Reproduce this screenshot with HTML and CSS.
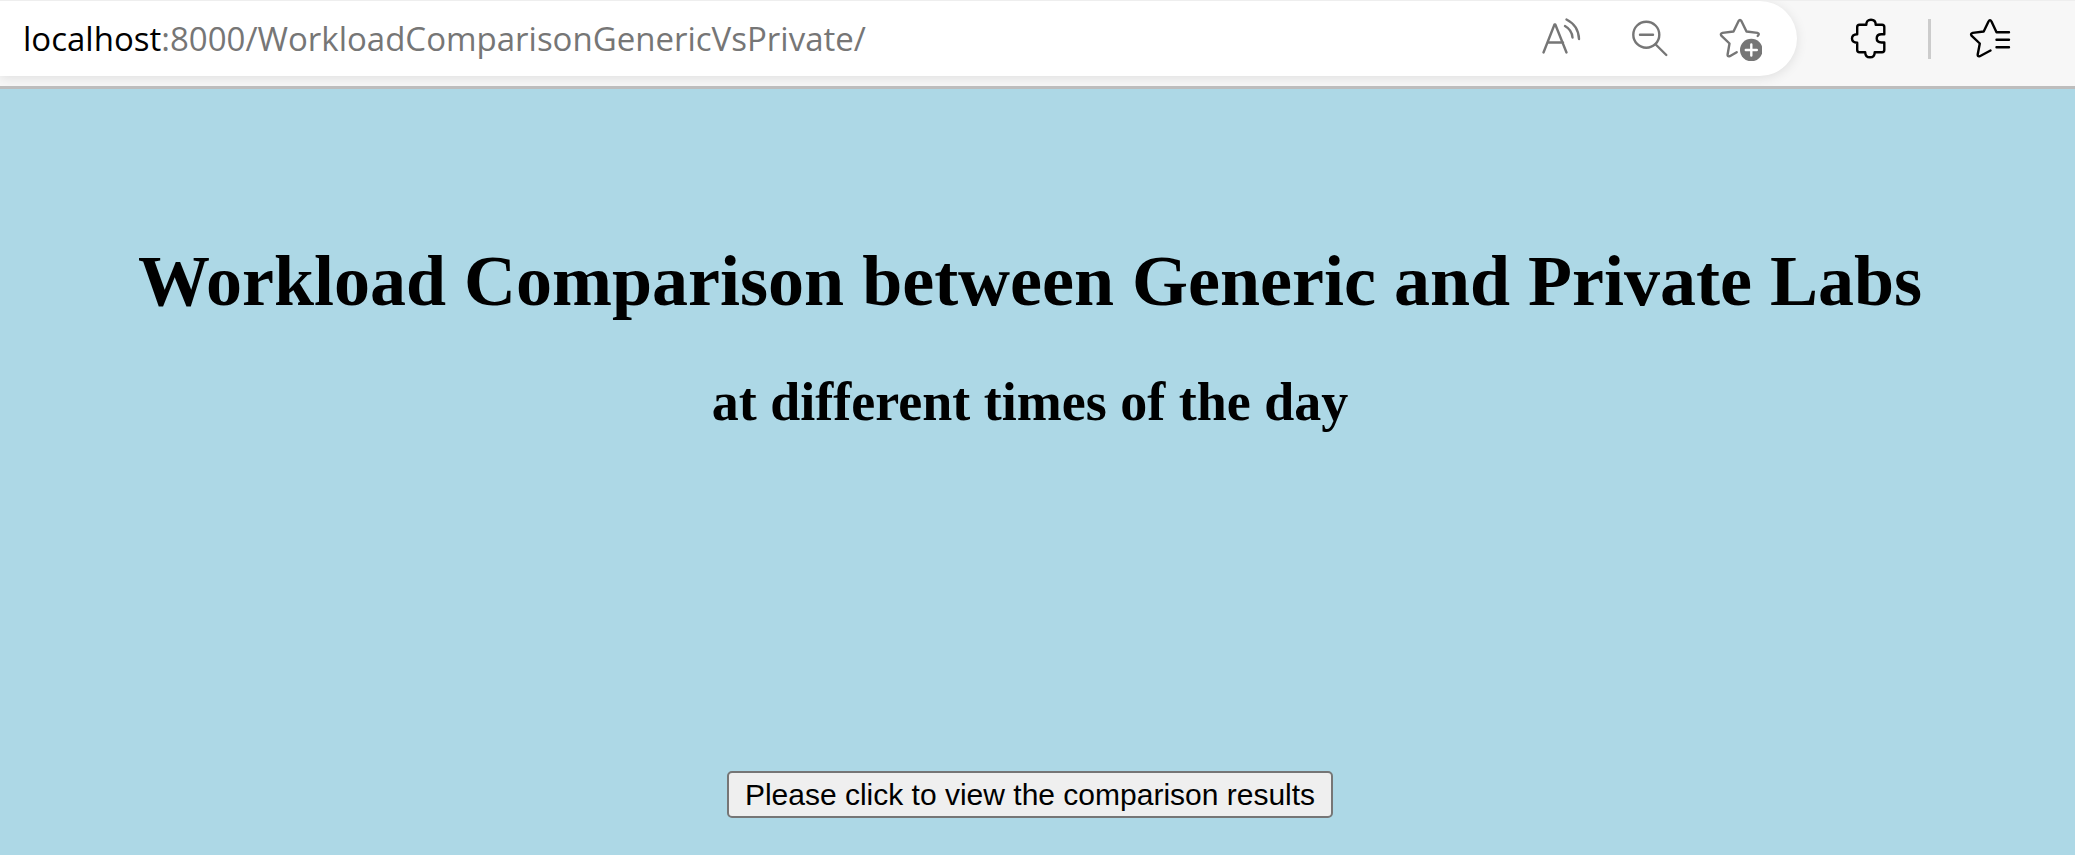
FILE: index.html
```html
<!DOCTYPE html>
<html lang="en">
<head>
<meta charset="utf-8">
<meta name="viewport" content="width=device-width, initial-scale=1">
<title>Workload Comparison</title>
<link rel="stylesheet" href="styles.css">
</head>
<body>
<header class="toolbar">
  <div class="omnibox">
    <div class="url" role="textbox" contenteditable="true" spellcheck="false" aria-label="Address"><span class="url-host">localhost</span>:8000/WorkloadComparisonGenericVsPrivate/</div>
    <button class="icon-button" type="button" aria-label="Read aloud">
      <svg class="icon" viewBox="0 0 44 44" aria-hidden="true"><path d="M5.500 35.500 16.500 7.500h.8L28.500 35.500M9.500 25.500h15.500M27 9q7 4 7.500 11.500M28.500 2.500q12 6 12.500 19.500"/></svg>
    </button>
    <button class="icon-button" type="button" aria-label="Zoom out">
      <svg class="icon" viewBox="0 0 44 44" aria-hidden="true"><circle cx="18.300" cy="17.700" r="13"/><path d="M12 17.700h13M27.700 27.500 38.300 38"/></svg>
    </button>
    <button class="icon-button" type="button" aria-label="Add to favorites">
      <svg class="icon" viewBox="0 0 44 44" aria-hidden="true"><path d="M18.700 35.200 11.800 39.200Q9.300 40 9.600 37.500L11.500 26.500 3.300 18.600Q2 16.500 4.500 15.900L15.500 14.500 20.500 4.200Q22 1.800 23.500 4.200L28.500 14.500 39.500 15.900Q42 16.700 39.700 19"/><circle class="badge" cx="33.300" cy="33" r="11.300"/><path class="badge-plus" d="M27.800 33h11M33.300 27.500v11"/></svg>
    </button>
  </div>
  <button class="icon-button dark extensions" type="button" aria-label="Extensions">
    <svg class="icon" viewBox="0 0 44 44" aria-hidden="true"><path d="M11.500 7.700H18.300Q18.300 2.800 23 2.800T27.700 7.700H34Q36.300 7.700 36.300 10V17.200H33.500Q28.700 17.200 28.700 21.300T33.500 25.500H36.300V33Q36.300 35.200 34 35.200H26.700Q26.700 40.300 22 40.300T17.200 35.200H11.500Q9.200 35.200 9.200 33V25.700Q4 25.700 4 21.500T9.200 17.200V10Q9.200 7.700 11.500 7.700Z"/></svg>
  </button>
  <span class="divider"></span>
  <button class="icon-button dark" type="button" aria-label="Favorites">
    <svg class="icon" viewBox="0 0 44 44" aria-hidden="true"><path d="M22.500 33.500 11.800 39.200Q9.500 40 9.700 37.500L11.800 26.500 3.500 18.600Q2.200 16.500 4.700 15.900L15.700 14.500 20.500 4.500Q22 1.800 23.500 4.500L28.500 15.300H41M28.500 22.700H41M28.500 30.200H41"/></svg>
  </button>
</header>
<main class="page">
  <h1 class="title">Workload Comparison between Generic and Private Labs</h1>
  <h2 class="subtitle">at different times of the day</h2>
  <button class="results-button" type="button">Please click to view the comparison results</button>
</main>
</body>
</html>
```
FILE: styles.css
```css
* {
  box-sizing: border-box;
}

body {
  margin: 0;
  min-height: 100vh;
  display: flex;
  flex-direction: column;
  background: #add8e6;
}

.toolbar {
  display: flex;
  align-items: center;
  padding: 0 63px 10px 0;
  background: #f7f7f7;
  border-top: 1px solid #eee;
  border-bottom: 3px solid #bdbdbd;
  overflow: hidden;
}

.omnibox {
  flex: 1;
  min-width: 0;
  display: flex;
  align-items: center;
  gap: 46px;
  padding: 16px 35px 15px 23px;
  background: #fff;
  border-radius: 0 38px 38px 0;
  box-shadow: 0 2px 12px rgba(0, 0, 0, 0.1);
}

.url {
  flex: 1;
  min-width: 0;
  overflow: hidden;
  white-space: nowrap;
  outline: none;
  color: #767676;
  font: 33px/44px "Open Sans", "Noto Sans", sans-serif;
}

.url-host {
  color: #000;
}

.icon-button {
  flex: none;
  padding: 0;
  border: 0;
  background: none;
  color: #767676;
}

.dark {
  color: #000;
}

.extensions {
  margin-left: 51px;
}

.icon {
  display: block;
  width: 44px;
  height: 44px;
  fill: none;
  stroke: currentColor;
  stroke-width: 2.4;
  stroke-linecap: round;
  stroke-linejoin: round;
}

.badge {
  fill: currentColor;
  stroke: none;
}

.badge-plus {
  stroke: #fff;
}

.divider {
  flex: none;
  width: 3px;
  height: 40px;
  margin: 0 37px 0 36px;
  background: #ccc;
}

.page {
  flex: 1;
  display: flex;
  flex-direction: column;
  align-items: center;
  padding: 151px 15px 37px 0;
  text-align: center;
  font-family: "Liberation Serif", "Times New Roman", serif;
}

.title {
  margin: 0;
  font-size: 72px;
  line-height: 82px;
}

.subtitle {
  margin: 49px 0 0;
  font-size: 54px;
  line-height: 62px;
}

.results-button {
  margin-top: auto;
  padding: 4px 16px;
  border: 2px solid #767676;
  border-radius: 5px;
  background: #efefef;
  color: #000;
  font: 30px/35px "Liberation Sans", Arial, sans-serif;
}
```
